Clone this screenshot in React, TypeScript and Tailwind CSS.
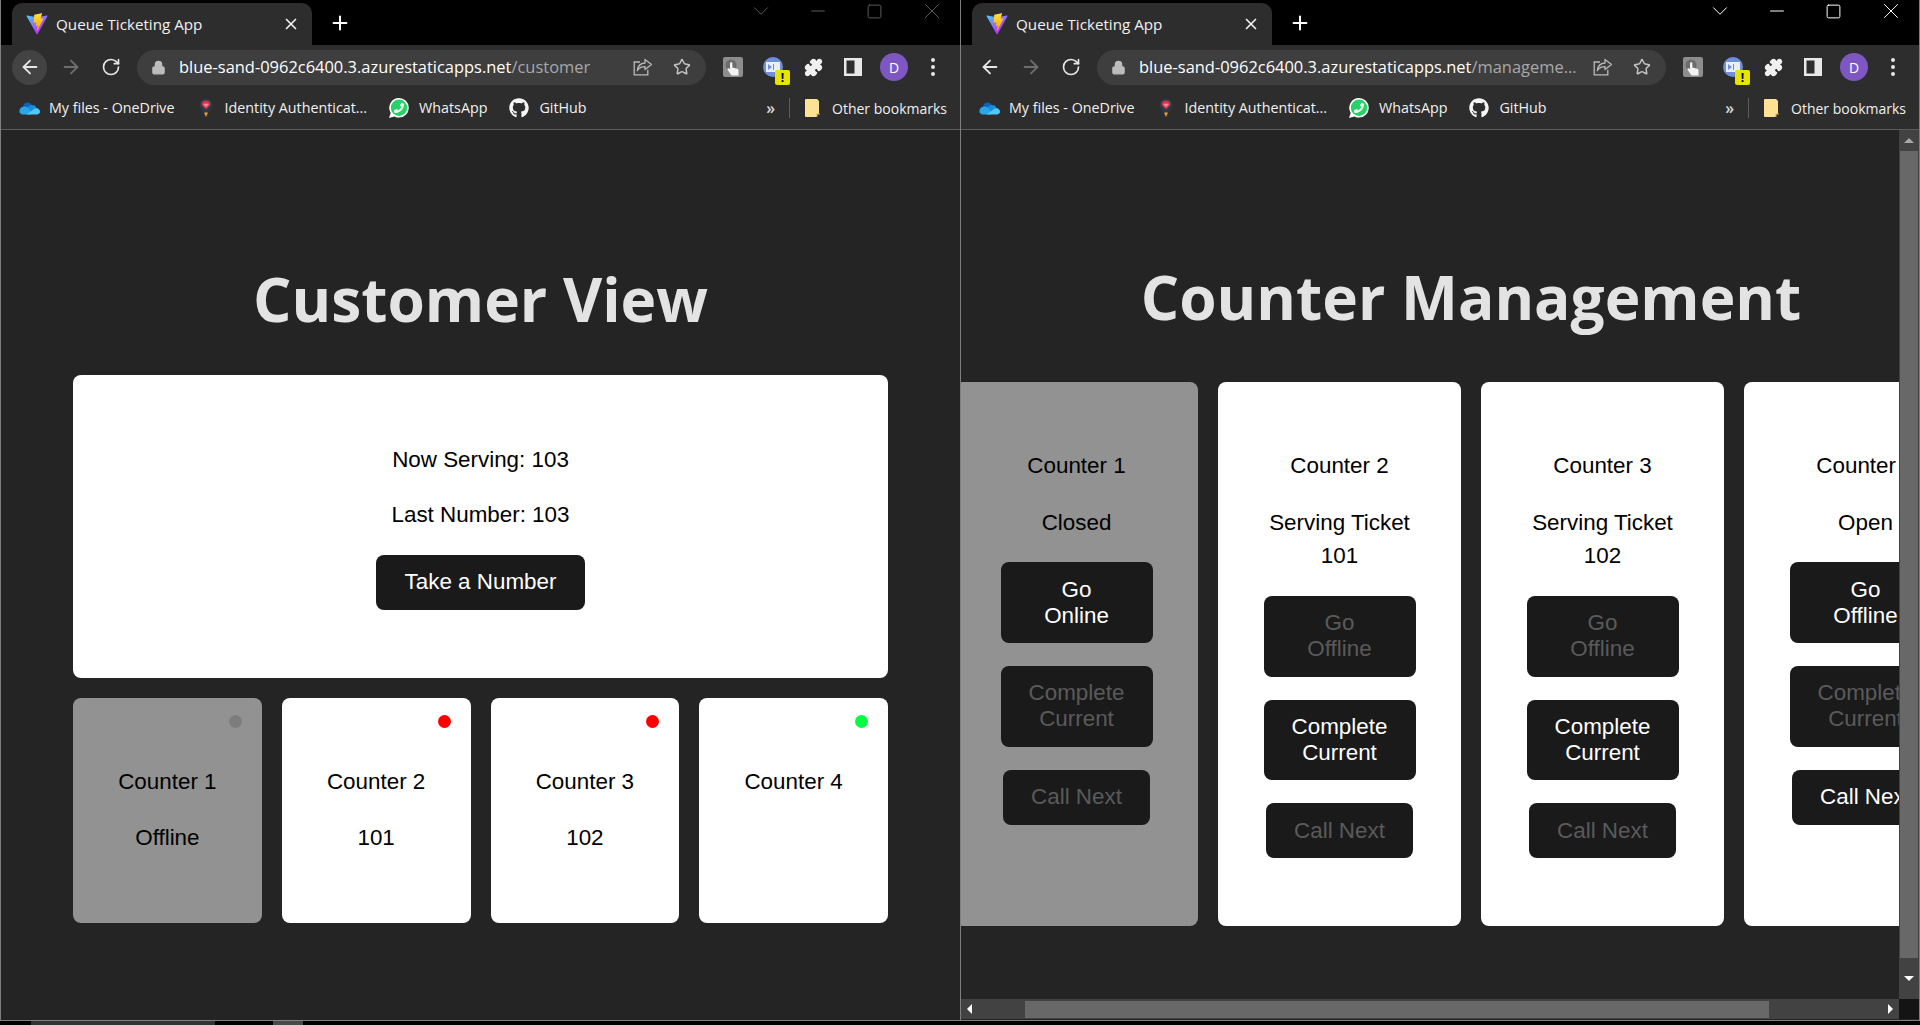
import { ArrowLeft, ArrowRight, RotateCw, Star, X, Plus, Lock, ChevronDown, Minus, Square, Puzzle } from "lucide-react";
import { FaGithub, FaPhoneAlt } from "react-icons/fa";

const uiFont = "font-['Open_Sans',sans-serif]";

function ViteLogo({ id }: { id: string }) {
  return (
    <svg width="22" height="22" viewBox="0 0 410 404" fill="none">
      <path d="M399.641 59.5246L215.643 388.545C211.844 395.338 202.084 395.378 198.228 388.618L10.5817 59.5563C6.38087 52.1896 12.6802 43.2665 21.0281 44.7586L205.223 77.6824C206.398 77.8924 207.601 77.8904 208.776 77.6763L389.119 44.8058C397.439 43.2894 403.768 52.1434 399.641 59.5246Z" fill={`url(#${id}a)`} />
      <path d="M292.965 1.5744L156.801 28.2552C154.563 28.6937 152.906 30.5903 152.771 32.8664L144.395 174.33C144.198 177.662 147.258 180.248 150.51 179.498L188.42 170.749C191.967 169.931 195.172 173.055 194.443 176.622L183.18 231.775C182.422 235.487 185.907 238.661 189.532 237.56L212.947 230.446C216.577 229.344 220.065 232.527 219.297 236.242L201.398 322.875C200.278 328.294 207.486 331.249 210.492 326.603L212.5 323.5L323.454 102.072C325.312 98.3645 322.108 94.137 318.036 94.9228L279.014 102.454C275.347 103.161 272.227 99.746 273.262 96.1583L298.731 7.86689C299.767 4.27314 296.636 0.855181 292.965 1.5744Z" fill={`url(#${id}b)`} />
      <defs>
        <linearGradient id={`${id}a`} x1="6" y1="33" x2="235" y2="344" gradientUnits="userSpaceOnUse">
          <stop stopColor="#41D1FF" />
          <stop offset="1" stopColor="#BD34FE" />
        </linearGradient>
        <linearGradient id={`${id}b`} x1="194.65" y1="8.82" x2="236.08" y2="292.99" gradientUnits="userSpaceOnUse">
          <stop stopColor="#FFEA83" />
          <stop offset="0.08" stopColor="#FFDD35" />
          <stop offset="1" stopColor="#FFA800" />
        </linearGradient>
      </defs>
    </svg>
  );
}

function OneDriveIcon() {
  return (
    <svg width="21" height="14" viewBox="0 0 21 14">
      <path d="M8 1.5a5 5 0 0 1 5 2.6 4 4 0 0 1 4.3 3.2L8 11 4 6.2A5 5 0 0 1 8 1.5z" fill="#0f62b5" />
      <path d="M13 4.2a4 4 0 0 1 4.3 3.1A3 3 0 0 1 20.5 10l-7 1L8.5 6.4A5 5 0 0 1 13 4.2z" fill="#1490df" />
      <path d="M4 5.8A4.2 4.2 0 0 1 8.6 6.6l5 5-2 1.9H3.6A3.3 3.3 0 0 1 .6 9 4 4 0 0 1 4 5.8z" fill="#28a8ea" />
      <path d="M20.6 9.3a2.8 2.8 0 0 1-2.4 4.2H7.5l6.3-4.4a4 4 0 0 1 6.8.2z" fill="#50c8f5" />
    </svg>
  );
}

function IdentityIcon() {
  return (
    <svg width="14" height="20" viewBox="0 0 14 20">
      <path d="M7 .5C3.2.5.5 3.3.5 6.8c0 2 .9 3.700 2.200 5L7 19.500l4.300-7.700c1.300-1.300 2.200-3 2.200-5C13.500 3.300 10.800.5 7 .5z" fill="#2b3a4a" />
      <path d="M7 2.500a4.500 4.500 0 0 0-4.500 4.300L7 11.500l4.500-4.700A4.500 4.500 0 0 0 7 2.500z" fill="#d8344a" />
      <path d="M4.200 6.500C5.500 5.300 8.500 5.300 9.800 6.500L7 9.200z" fill="#f08a96" />
      <path d="M5 14.500h4L7 19z" fill="#e5a021" />
    </svg>
  );
}

function WhatsAppIcon() {
  return (
    <div className="relative h-[20px] w-[20px]">
      <svg width="20" height="20" viewBox="0 0 20 20">
        <path d="M10 0a9.800 9.800 0 0 1 0 19.600c-1.700 0-3.300-.4-4.700-1.200L0 20l1.700-5.100A9.800 9.800 0 0 1 10 0z" fill="#ffffff" />
        <circle cx="10" cy="9.800" r="8.200" fill="#25d366" />
      </svg>
      <FaPhoneAlt className="absolute left-[5px] top-[5px] -scale-x-100" size={10} color="#ffffff" />
    </div>
  );
}

function ShareIcon() {
  return (
    <svg width="20" height="18" viewBox="0 0 20 18" fill="none" stroke="#b9b9b9" strokeWidth="1.3">
      <path d="M7 4H1.200v12.800h13.600v-5" />
      <path d="M12 1.500l6.500 5-6.500 5V8.600c-3.500 0-6 1-7.700 4 .4-4.300 3-7.300 7.700-7.600z" strokeLinejoin="round" />
    </svg>
  );
}

function TouchExtIcon() {
  return (
    <svg width="20" height="20" viewBox="0 0 20 20">
      <rect width="20" height="20" rx="2" fill="#8d8d8d" />
      <circle cx="8" cy="8" r="5.500" fill="#6c6c6c" />
      <path d="M7 6.500a1.200 1.200 0 0 1 2.400 0v4l4.600 1.200c1 .3 1.500 1 1.500 2V18.500H8.500L4.700 13c-.7-1.100.7-2.300 1.700-1.300l.6.600z" fill="#f2f2f2" />
    </svg>
  );
}

function CastExtIcon() {
  return (
    <div className="relative h-5 w-5">
      <div className="flex h-5 w-5 items-center justify-center rounded-full bg-[#6f8fdc]">
        <div className="flex h-[10px] w-[14px] items-center gap-[1px] bg-[#e8eefb] px-[2px]">
          <div className="h-0 w-0 border-y-[3px] border-l-[4px] border-y-transparent border-l-[#6f8fdc]" />
          <div className="h-[6px] w-[1px] bg-[#6f8fdc]" />
        </div>
      </div>
      <div className={`absolute left-[12px] top-[13px] flex h-[15px] w-[15px] items-center justify-center rounded-[2px] bg-[#e6e600] text-[12px] font-bold leading-none text-black ${uiFont}`}>
        !
      </div>
    </div>
  );
}

function SidePanelIcon() {
  return (
    <svg width="18" height="18" viewBox="0 0 18 18">
      <rect x="0" y="0" width="18" height="18" fill="#e8e8e8" />
      <rect x="2.500" y="2.500" width="8" height="13" fill="#2d2d2d" />
    </svg>
  );
}

function FolderIcon() {
  return (
    <svg width="15" height="18" viewBox="0 0 15 18">
      <path d="M1 0h11l2 2v14l-3 2H1a1 1 0 0 1-1-1V1a1 1 0 0 1 1-1z" fill="#fde293" />
      <path d="M11.500 14.500h3.500v3.500h-3.500z" fill="#d9b64f" />
      <path d="M12.500 15.500h2.500v2.500h-2.500z" fill="#2d2d2d" />
    </svg>
  );
}

function TrafficDots() {
  return (
    <div className="flex flex-col gap-[3px]">
      <div className="h-[4px] w-[4px] rounded-full bg-[#e6e6e6]" />
      <div className="h-[4px] w-[4px] rounded-full bg-[#e6e6e6]" />
      <div className="h-[4px] w-[4px] rounded-full bg-[#e6e6e6]" />
    </div>
  );
}

function Bookmark({ icon, label, iconWidth, gap }: { icon: React.ReactNode; label: string; iconWidth: string; gap: string }) {
  return (
    <div className="flex items-center">
      <div className={`flex items-center justify-center ${iconWidth} ${gap}`}>{icon}</div>
      <span className="text-[14.300px] text-[#f0f0f0]">{label}</span>
    </div>
  );
}

function BrowserChrome({ id, path, active, backHover }: { id: string; path: string; active: boolean; backHover: boolean }) {
  const ctl = active ? "#ffffff" : "#5a5a5a";
  return (
    <div className={uiFont}>
      {/* Tab strip */}
      <div className="flex h-[45px] bg-black">
        <div className="ml-[11px] mt-[3px] flex h-[42px] w-[300px] items-center rounded-t-[10px] bg-[#2d2d2d] pl-[14px] pr-[12px]">
          <ViteLogo id={id} />
          <span className="ml-[8px] flex-1 text-[15.200px] text-[#f0f0f0]">Queue Ticketing App</span>
          <X size={18} color="#f0f0f0" strokeWidth={2.200} />
        </div>
        <div className="ml-[17px] mt-[12px] h-[22px]">
          <Plus size={22} color="#ffffff" strokeWidth={2.200} />
        </div>
        <div className="-mt-[1px] ml-auto flex h-[24px]">
          {[
            <ChevronDown key="c" size={26} strokeWidth={1} absoluteStrokeWidth color={ctl} />,
            <Minus key="m" size={22} strokeWidth={1} absoluteStrokeWidth color={ctl} />,
            <Square key="s" size={17} strokeWidth={1} absoluteStrokeWidth color={ctl} />,
            <X key="x" size={26} strokeWidth={1} absoluteStrokeWidth color={ctl} />,
          ].map((icon, i) => (
            <div key={i} className="flex w-[57px] items-center justify-center">
              {icon}
            </div>
          ))}
        </div>
      </div>

      {/* Toolbar */}
      <div className="flex h-[45px] items-center bg-[#2d2d2d] pb-[1px]">
        <div className={`ml-[11px] flex h-[35px] w-[35px] items-center justify-center rounded-full ${backHover ? "bg-[#434343]" : ""}`}>
          <ArrowLeft size={22} color="#e6e6e6" />
        </div>
        <div className="ml-[6px] flex h-[35px] w-[35px] items-center justify-center">
          <ArrowRight size={22} color="#6e6e6e" />
        </div>
        <div className="ml-[5px] flex h-[35px] w-[35px] items-center justify-center">
          <RotateCw size={20} color="#e6e6e6" />
        </div>
        <div className="ml-[9px] flex h-[35px] w-[569px] items-center rounded-full bg-[#3e3e3e] pl-[14px]">
          <Lock size={15} color="#bdbdbd" fill="#bdbdbd" />
          <span className="ml-[13px] w-[447px] truncate whitespace-nowrap text-[16.450px] text-white">
            blue-sand-0962c6400.3.azurestaticapps.net<span className="text-[#a8a8a8]">{path}</span>
          </span>
          <div className="ml-[7px]">
            <ShareIcon />
          </div>
          <Star className="ml-[20px]" size={18} color="#c4c4c4" />
        </div>
        <div className="ml-[17px]">
          <TouchExtIcon />
        </div>
        <div className="ml-[20px]">
          <CastExtIcon />
        </div>
        <Puzzle className="ml-[21px]" size={19} color="#f0f0f0" fill="#f0f0f0" />
        <div className="ml-[21px]">
          <SidePanelIcon />
        </div>
        <div className="ml-[18px] flex h-[28px] w-[28px] items-center justify-center rounded-full bg-[#7e57c2] text-[14px] text-white">D</div>
        <div className="ml-[23px]">
          <TrafficDots />
        </div>
      </div>

      {/* Bookmarks bar */}
      <div className="flex h-[40px] items-center border-b border-[#5c5c5c] bg-[#2d2d2d] pb-[3px] pl-[18px]">
        <Bookmark icon={<OneDriveIcon />} label="My files - OneDrive" iconWidth="w-[21px]" gap="mr-[9px]" />
        <div className="ml-[24px]">
          <Bookmark icon={<IdentityIcon />} label="Identity Authenticat..." iconWidth="w-[14px]" gap="mr-[12px]" />
        </div>
        <div className="ml-[22px]">
          <Bookmark icon={<WhatsAppIcon />} label="WhatsApp" iconWidth="w-[20px]" gap="mr-[10px]" />
        </div>
        <div className="ml-[22px]">
          <Bookmark icon={<FaGithub size={20} color="#f5f5f5" />} label="GitHub" iconWidth="w-[20px]" gap="mr-[10px]" />
        </div>
        <span className="ml-auto text-[16px] font-semibold text-[#d8d8d8]">»</span>
        <div className="ml-[14px] mr-[15px] h-[20px] w-[1px] bg-[#5c5c5c]" />
        <div className="mr-[13px] flex items-center">
          <div className="mr-[12px] flex">
            <FolderIcon />
          </div>
          <span className="text-[14px] text-[#f0f0f0]">Other bookmarks</span>
        </div>
      </div>
    </div>
  );
}

function CustomerPage() {
  const counters = [
    { name: "Counter 1", status: "Offline", dot: "bg-[#7d7d7d]", card: "bg-[#929292]" },
    { name: "Counter 2", status: "101", dot: "bg-[#ff0000]", card: "bg-white" },
    { name: "Counter 3", status: "102", dot: "bg-[#ff0000]", card: "bg-white" },
    { name: "Counter 4", status: "", dot: "bg-[#00ff40]", card: "bg-white" },
  ];
  return (
    <div className="h-[889px] px-[72px] pt-[129px]">
      <h1 className="text-center font-['Open_Sans',sans-serif] text-[60.400px] font-bold leading-[80px] text-[#e3e3e3]">Customer View</h1>
      <div className="mt-[36px] flex h-[303px] flex-col items-center rounded-[8px] bg-white pt-[67.500px] text-[22.400px] leading-[33.600px] text-black">
        <p>Now Serving: 103</p>
        <p className="mt-[22.400px]">Last Number: 103</p>
        <button className="mt-[22.700px] rounded-[8px] bg-[#1a1a1a] px-[29px] py-[14.400px] text-[22.400px] leading-[26px] text-white">Take a Number</button>
      </div>
      <div className="mt-[20px] grid grid-cols-4 gap-[20px]">
        {counters.map((c) => (
          <div key={c.name} className={`relative flex h-[225px] flex-col items-center rounded-[8px] pt-[66.500px] text-[22.400px] leading-[33.600px] text-black ${c.card}`}>
            <div className={`absolute right-[20px] top-[17px] h-[13px] w-[13px] rounded-full ${c.dot}`} />
            <p>{c.name}</p>
            <p className="mt-[23.400px]">{c.status}</p>
          </div>
        ))}
      </div>
    </div>
  );
}

function MgmtButton({ lines, enabled, wide = true }: { lines: string[]; enabled: boolean; wide?: boolean }) {
  return (
    <button className={`rounded-[8px] bg-[#1a1a1a] py-[14.400px] text-[22.400px] leading-[26px] ${wide ? "w-[152px]" : "w-[147px]"} ${enabled ? "text-white" : "text-[#5a5a5a]"}`}>
      {lines.map((l) => (
        <span key={l} className="block">
          {l}
        </span>
      ))}
    </button>
  );
}

function ManagementPage() {
  const counters = [
    { name: "Counter 1", status: ["Closed"], card: "bg-[#929292]", toggle: "Online", toggleOn: true, complete: false, next: false },
    { name: "Counter 2", status: ["Serving Ticket", "101"], card: "bg-white", toggle: "Offline", toggleOn: false, complete: true, next: false },
    { name: "Counter 3", status: ["Serving Ticket", "102"], card: "bg-white", toggle: "Offline", toggleOn: false, complete: true, next: false },
    { name: "Counter 4", status: ["Open"], card: "bg-white", toggle: "Offline", toggleOn: true, complete: false, next: true },
  ];
  return (
    <div className="h-[869px] w-[938px] overflow-hidden pt-[127px]">
      <h1 className="w-[1020px] text-center font-['Open_Sans',sans-serif] text-[60.400px] font-bold leading-[80px] text-[#e3e3e3]">Counter Management</h1>
      <div className="-ml-[6px] mt-[45px] flex w-[1032px] gap-[20px]">
        {counters.map((c) => (
          <div key={c.name} className={`flex h-[544px] w-[243px] shrink-0 flex-col items-center gap-[23px] rounded-[8px] pt-[67px] text-[22.400px] leading-[33.600px] text-black ${c.card}`}>
            <p>{c.name}</p>
            <div className="text-center">
              {c.status.map((s) => (
                <p key={s}>{s}</p>
              ))}
            </div>
            <MgmtButton lines={["Go", c.toggle]} enabled={c.toggleOn} />
            <MgmtButton lines={["Complete", "Current"]} enabled={c.complete} />
            <MgmtButton lines={["Call Next"]} enabled={c.next} wide={false} />
          </div>
        ))}
      </div>
    </div>
  );
}

function Triangle({ dir }: { dir: "up" | "down" | "left" | "right" }) {
  if (dir === "up") return <div className="h-0 w-0 border-x-[5px] border-b-[5px] border-x-transparent border-b-[#a8a8a8]" />;
  if (dir === "down") return <div className="h-0 w-0 border-x-[5px] border-t-[5px] border-x-transparent border-t-white" />;
  if (dir === "left") return <div className="h-0 w-0 border-y-[5px] border-r-[5px] border-y-transparent border-r-white" />;
  return <div className="h-0 w-0 border-y-[5px] border-l-[5px] border-y-transparent border-l-white" />;
}

export default function App() {
  return (
    <div className="h-[1025px] w-[1920px] overflow-hidden bg-black font-['Liberation_Sans',Arial,sans-serif]">
      <div className="flex h-[1021px]">
        {/* Left window */}
        <div className="h-[1021px] w-[960px] border-b border-l border-[#7f7f7f] bg-[#242424]">
          <BrowserChrome id="l" path="/customer" active={false} backHover />
          <CustomerPage />
        </div>

        {/* Right window */}
        <div className="h-[1021px] w-[960px] border-b border-l border-r border-[#7f7f7f] bg-[#242424]">
          <BrowserChrome id="r" path="/manageme..." active backHover={false} />
          <div className="flex">
            <ManagementPage />
            <div className="flex h-[869px] w-[20px] flex-col items-center bg-[#424242]">
              <div className="flex h-[21px] items-center">
                <Triangle dir="up" />
              </div>
              <div className="h-[807px] w-[18px] bg-[#686868]" />
              <div className="flex flex-1 items-center">
                <Triangle dir="down" />
              </div>
            </div>
          </div>
          <div className="flex h-[20px]">
            <div className="flex w-[938px] items-center bg-[#424242]">
              <div className="ml-[6px] w-[58px]">
                <Triangle dir="left" />
              </div>
              <div className="h-[17px] w-[744px] bg-[#686868]" />
              <div className="ml-auto mr-[6px]">
                <Triangle dir="right" />
              </div>
            </div>
            <div className="w-[20px] bg-[#141414]" />
          </div>
        </div>
      </div>

      {/* Desktop strip below the windows */}
      <div className="flex h-[4px]">
        <div className="ml-[31px] w-[184px] bg-[#333333]" />
        <div className="ml-[58px] w-[30px] bg-[#4a4a4a]" />
      </div>
    </div>
  );
}
